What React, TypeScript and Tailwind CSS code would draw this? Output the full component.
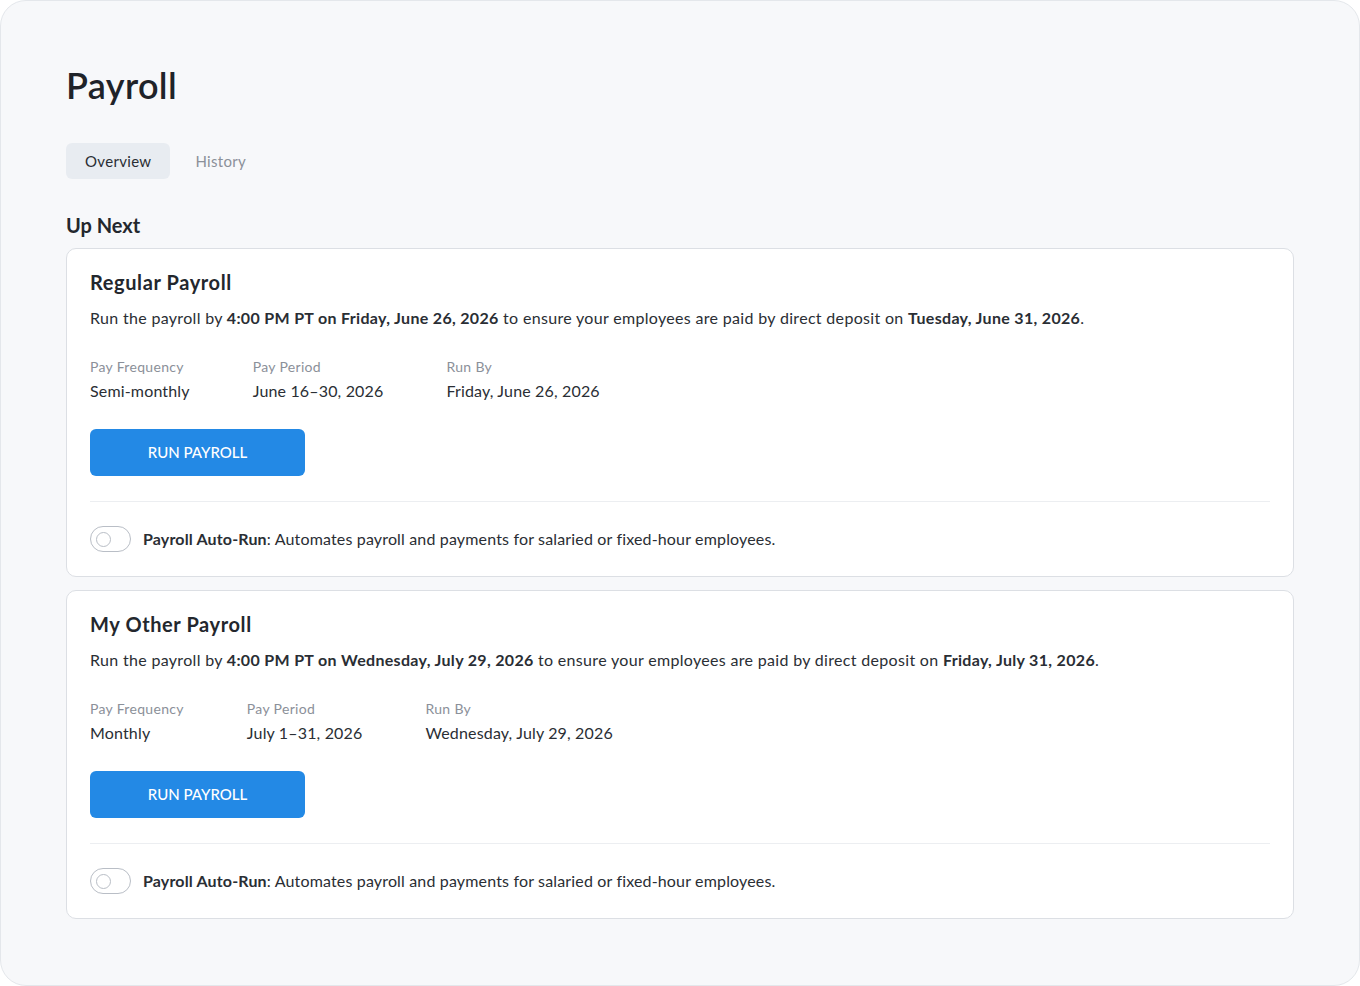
type PayrollCardProps = {
  title: string
  deadline: string
  depositDate: string
  frequency: string
  period: string
  runBy: string
}

const payrolls: PayrollCardProps[] = [
  {
    title: 'Regular Payroll',
    deadline: '4:00 PM PT on Friday, June 26, 2026',
    depositDate: 'Tuesday, June 31, 2026',
    frequency: 'Semi-monthly',
    period: 'June 16–30, 2026',
    runBy: 'Friday, June 26, 2026',
  },
  {
    title: 'My Other Payroll',
    deadline: '4:00 PM PT on Wednesday, July 29, 2026',
    depositDate: 'Friday, July 31, 2026',
    frequency: 'Monthly',
    period: 'July 1–31, 2026',
    runBy: 'Wednesday, July 29, 2026',
  },
]

function Toggle() {
  return (
    <button
      type="button"
      aria-label="Toggle auto-run"
      className="flex h-[26px] w-[41px] shrink-0 items-center rounded-full border border-[#b9bec6] bg-white pl-[5px]"
    >
      <span className="h-[15px] w-[15px] rounded-full border border-[#b9bec6]" />
    </button>
  )
}

function PayrollCard({
  title,
  deadline,
  depositDate,
  frequency,
  period,
  runBy,
}: PayrollCardProps) {
  const details = [
    { label: 'Pay Frequency', value: frequency },
    { label: 'Pay Period', value: period },
    { label: 'Run By', value: runBy },
  ]

  return (
    <section className="rounded-[10px] border border-[#dcdfe4] bg-white px-[23px] pt-[19px] pb-6">
      <h3 className="text-[20px] leading-7 font-bold tracking-[0.03em] text-[#23272d]">
        {title}
      </h3>
      <p className="mt-[10px] text-[16px] leading-6 text-[#2a2e34]">
        Run the payroll by <strong className="font-bold">{deadline}</strong> to
        ensure your employees are paid by direct deposit on{' '}
        <strong className="font-bold">{depositDate}</strong>.
      </p>

      <dl className="mt-[27px] flex gap-[63px]">
        {details.map((d) => (
          <div key={d.label} className="flex flex-col gap-[2px]">
            <dt className="text-[14px] leading-5 text-[#8b9099]">{d.label}</dt>
            <dd className="text-[16px] leading-6 tracking-[0.01em] text-[#2a2e34]">
              {d.value}
            </dd>
          </div>
        ))}
      </dl>

      <button
        type="button"
        className="mt-[26px] h-[47px] w-[215px] rounded-[6px] bg-[#2389e5] text-[15px] font-medium tracking-normal text-white"
      >
        RUN PAYROLL
      </button>

      <div className="mt-[25px] border-t border-[#eceef1]" />

      <div className="mt-[24px] flex items-center gap-3">
        <Toggle />
        <p className="text-[16px] leading-6 tracking-[0.01em] text-[#2a2e34]">
          <strong className="font-bold">Payroll Auto-Run</strong>: Automates
          payroll and payments for salaried or fixed-hour employees.
        </p>
      </div>
    </section>
  )
}

export default function App() {
  return (
    <div className="bg-white font-['Lato',sans-serif] tracking-[0.02em]">
      <div className="h-[986px] rounded-[26px] border border-[#e4e7eb] bg-[#f7f8fa] px-[65px] pt-[64px]">
        <h1 className="text-[36px] leading-10 font-semibold tracking-[0.01em] text-[#1f2329]">
          Payroll
        </h1>

        <nav aria-label="Payroll tabs" className="mt-[38px] flex items-center gap-[9px]">
          <button
            type="button"
            className="h-9 rounded-[6px] bg-[#e8ecf1] px-[19px] text-[15px] text-[#2a2e34]"
          >
            Overview
          </button>
          <button type="button" className="h-9 px-[16px] text-[15px] text-[#8b9099]">
            History
          </button>
        </nav>

        <h2 className="mt-[32px] text-[20px] leading-7 font-bold tracking-normal text-[#23272d]">
          Up Next
        </h2>

        <div className="mt-[9px] flex flex-col gap-[13px]">
          {payrolls.map((p) => (
            <PayrollCard key={p.title} {...p} />
          ))}
        </div>
      </div>
    </div>
  )
}
